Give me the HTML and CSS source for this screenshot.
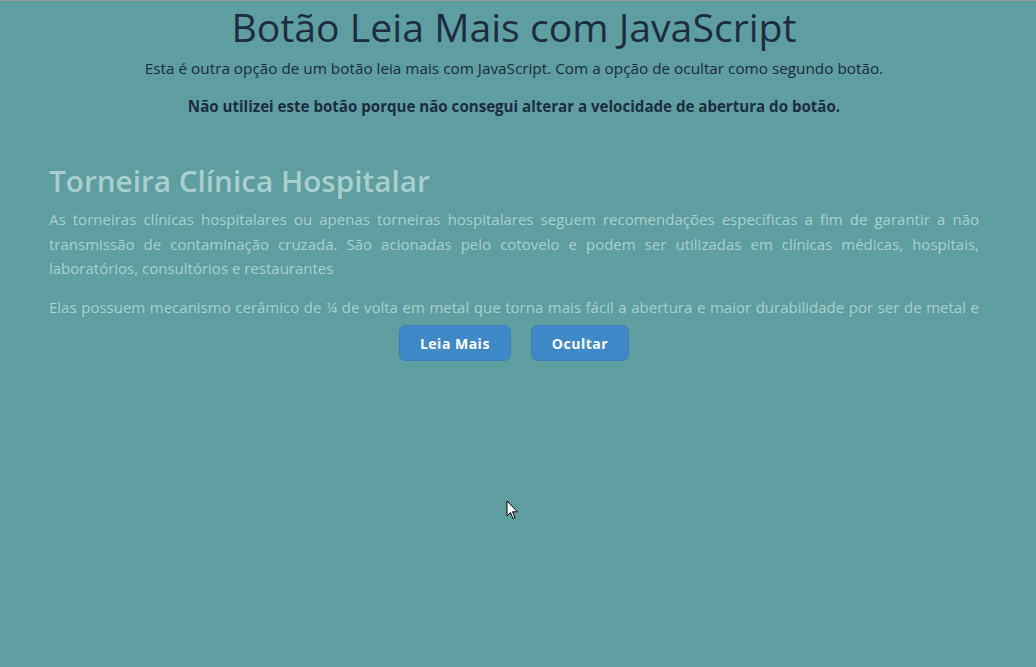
FILE: index.html
```html
<!DOCTYPE html>
<html lang="pt-BR">
<head>
<meta charset="utf-8">
<title>Botão Leia Mais com JavaScript</title>
<link rel="stylesheet" href="styles.css">
</head>
<body>
<header class="intro">
  <h1 class="title">Botão Leia Mais com JavaScript</h1>
  <p class="lead">Esta é outra opção de um botão leia mais com JavaScript. Com a opção de ocultar como segundo botão.</p>
  <p class="note">Não utilizei este botão porque não consegui alterar a velocidade de abertura do botão.</p>
</header>
<main class="article">
  <h2 class="article-title">Torneira Clínica Hospitalar</h2>
  <div class="article-body">
    <p>As torneiras clínicas hospitalares ou apenas torneiras hospitalares seguem recomendações específicas a fim de garantir a não transmissão de contaminação cruzada. São acionadas pelo cotovelo e podem ser utilizadas em clínicas médicas, hospitais, laboratórios, consultórios e restaurantes</p>
    <p class="teaser">Elas possuem mecanismo cerâmico de ¼ de volta em metal que torna mais fácil a abertura e maior durabilidade por ser de metal e<span class="more"> não de plástico. Os modelos mais comuns possuem bica alta e móvel, facilitando a higienização das mãos e dos antebraços.</span></p>
  </div>
  <div class="actions">
    <button class="btn" type="button">Leia Mais</button>
    <button class="btn" type="button">Ocultar</button>
  </div>
</main>
<svg class="cursor" width="13" height="21" viewBox="0 0 13 21" aria-hidden="true">
  <path d="M1 1 L1 16 L4.5 12.5 L7 18.5 L9 17.6 L6.6 11.8 L11.5 11.8 Z" fill="#fff" stroke="#000" stroke-width="1" stroke-linejoin="miter"/>
</svg>
</body>
</html>
```
FILE: styles.css
```css
html {
  background: #5f9ea0;
}
body {
  margin: 0;
  padding-right: 8px;
  min-height: 667px;
  border-top: 1px solid #9a9a9a;
  box-sizing: border-box;
  background: #5f9ea0;
  font-family: "Open Sans", "Noto Sans", sans-serif;
  position: relative;
}
.intro {
  text-align: center;
  color: #1c2d42;
}
.title {
  margin: 0;
  padding-top: 1px;
  font-size: 39.2px;
  font-weight: 500;
  line-height: 50px;
}
.lead {
  margin: 6px 0 0;
  font-size: 15.3px;
  line-height: 20px;
}
.note {
  margin: 18px 0 0;
  font-size: 15.1px;
  font-weight: 700;
  line-height: 20px;
}
.article {
  margin: 45px 49px 0 49px;
  color: #a9d0cf;
}
.article-title {
  margin: 0;
  font-size: 29.7px;
  font-weight: 600;
  line-height: 40px;
}
.article-body {
  margin-top: 6px;
  font-size: 15px;
  line-height: 24.5px;
  text-align: justify;
}
.article-body p {
  margin: 0 0 14px;
}
.article-body .teaser {
  margin-bottom: 0;
  text-align-last: justify;
}
.more {
  display: none;
}
.actions {
  display: flex;
  justify-content: center;
  gap: 20px;
  margin-top: 6px;
}
.btn {
  height: 36px;
  padding: 0 20px;
  border: 1px solid #3a7ebc;
  border-radius: 7px;
  background: #4089c9;
  color: #fff;
  font-family: "Open Sans", "Noto Sans", sans-serif;
  font-size: 14px;
  font-weight: 700;
  letter-spacing: 0.5px;
}
.cursor {
  position: absolute;
  left: 506px;
  top: 499px;
}
```
